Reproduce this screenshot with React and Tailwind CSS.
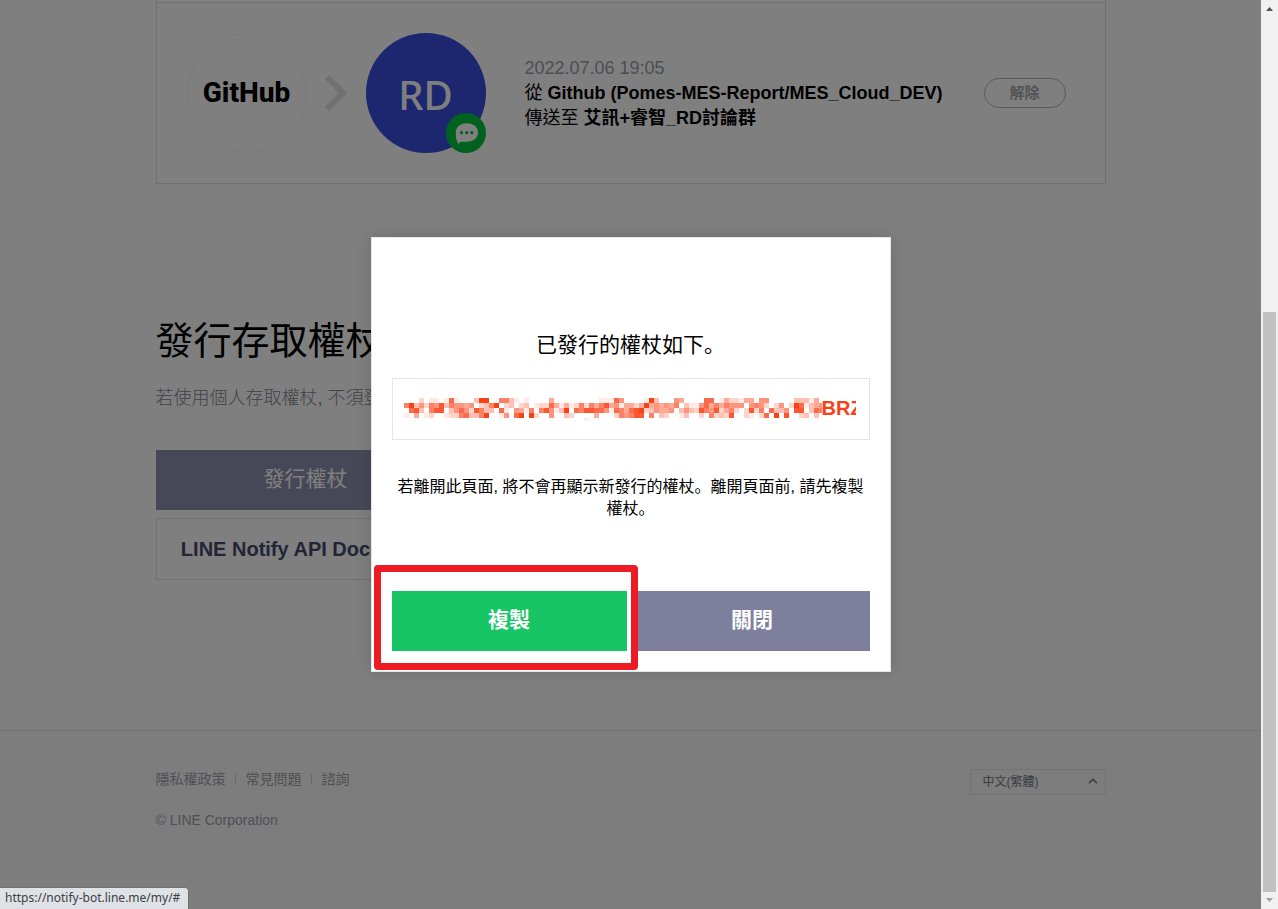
import React from "react";

const redactedRows = [
  "000201101710003990066310100004000000000111750000193000540000770142214405500000333140",
  "693526583655450236902302301227414126264684514424945454603115746465550565202502971345",
  "078306880357528633071054160685139076887751764789235445035328658246202826073350880376",
  "104012001226733690015079092005003200004000265688060320013002062328002102709080023030",
  "000000000000000000000000000000000000100000000000000000000000000000000000000000000000",
];

function RedactedToken() {
  return (
    <svg width="418" height="23" viewBox="0 0 418 23" className="shrink-0" shapeRendering="crispEdges" aria-hidden="true">
      {redactedRows.flatMap((row, y) =>
        row.split("").map((level, x) =>
          level === "0" ? null : (
            <rect
              key={`${x}-${y}`}
              x={x * 5}
              y={y * 5}
              width="5"
              height={y === 4 ? 3 : 5}
              fill="#f94118"
              fillOpacity={Number(level) / 9}
            />
          ),
        ),
      )}
    </svg>
  );
}

function ConnectedService() {
  return (
    <li className="flex items-center border-t border-[#e3e3e3] py-[30px] pr-[39px] pl-[30px]">
      <div className="flex size-[120px] shrink-0 items-center justify-center rounded-full border border-[#f4f4f4]">
        <span className="font-['Roboto',sans-serif] text-[28px] leading-8 font-extrabold text-black">
          GitHub
        </span>
      </div>
      <svg width="22" height="36" viewBox="0 0 22 36" className="ml-[18px] shrink-0" fill="none" aria-hidden="true">
        <path d="M2 2 L18 18 L2 34" stroke="#e2e2e2" strokeWidth="6" />
      </svg>
      <div className="relative ml-[19px] flex size-[120px] shrink-0 items-center justify-center rounded-full bg-[#394fdf]">
        <span className="pt-1 font-['Noto_Sans',sans-serif] text-[40px] leading-[48px] font-medium text-white">RD</span>
        <span className="absolute right-0 bottom-0 size-10 rounded-full bg-[#00c43c]">
          <svg viewBox="0 0 40 40" className="size-10" aria-hidden="true">
            <path
              d="M21 10.3c-6.4 0-11.2 3.4-11.2 9.3 0 4.4.2 8.200 2.900 11.800.3-1.500 1-2.600 2.700-2.600h5.600c6.400 0 11-3.800 11-9.300s-4.600-9.200-11-9.200z"
              fill="#fff"
            />
            <circle cx="15.500" cy="19.700" r="1.600" fill="#00c43c" />
            <circle cx="20.700" cy="19.700" r="1.600" fill="#00c43c" />
            <circle cx="25.800" cy="19.700" r="1.600" fill="#00c43c" />
          </svg>
        </span>
      </div>
      <div className="ml-[39px] grow text-lg leading-[25px] text-black">
        <time className="block text-[#9a9ca3]">2022.07.06 19:05</time>
        <p>
          從 <strong>Github (Pomes-MES-Report/MES_Cloud_DEV)</strong>
        </p>
        <p>
          傳送至 <strong>艾訊+睿智_RD討論群</strong>
        </p>
      </div>
      <button
        type="button"
        className="w-[82px] shrink-0 rounded-full border border-[#b2b2b2] py-1 text-[15px] leading-5 font-bold text-[#a5a7ab]"
      >
        解除
      </button>
    </li>
  );
}

function TokenDialog() {
  return (
    <div
      role="dialog"
      aria-modal="true"
      aria-labelledby="token-title"
      className="w-[520px] border border-[#e5e5e5] bg-white px-5 pt-[92px] pb-5 font-['Liberation_Sans','Noto_Sans_CJK_SC',sans-serif] shadow-[0_0_16px_rgba(0,0,0,0.15)]"
    >
      <h2 id="token-title" className="text-center text-[21px] leading-[30px] text-black">
        <label htmlFor="token">已發行的權杖如下。</label>
      </h2>
      <div className="mt-[18px] flex h-[62px] items-center overflow-hidden border border-[#e5e5e5] pr-[13px] pl-[11px]">
        <RedactedToken />
        <input
          id="token"
          readOnly
          defaultValue="BRZ"
          className="min-w-0 grow pb-[2px] text-xl leading-6 font-bold text-[#f94118] outline-none"
        />
      </div>
      <p className="mt-9 text-center text-base leading-[22px] text-black">
        若離開此頁面, 將不會再顯示新發行的權杖。離開頁面前, 請先複製權杖。
      </p>
      <div className="mt-[71px] flex gap-2 text-[21px] leading-[30px] font-bold text-white">
        <div className="relative flex-1">
          <button type="button" className="w-full bg-[#17c564] pt-[14px] pb-4">
            複製
          </button>
          <span className="pointer-events-none absolute -top-[26px] -right-[11px] -bottom-[19px] -left-[18px] z-10 rounded border-[7px] border-[#ed1c24]" />
        </div>
        <button type="button" className="flex-1 bg-[#7d7f9d] pt-[14px] pb-4">
          關閉
        </button>
      </div>
    </div>
  );
}

function PageFooter() {
  return (
    <footer className="grow border-t border-[#e6e6e6] bg-[#fafafa]">
      <div className="mx-auto flex max-w-[950px] items-start justify-between pt-[38px] text-sm leading-5 text-[#a0a1a8]">
        <div>
          <nav className="flex items-center">
            <a href="#privacy">隱私權政策</a>
            <span className="mr-[10px] ml-[9px] h-[10px] w-px bg-[#d5d5d5]" />
            <a href="#faq">常見問題</a>
            <span className="mr-[10px] ml-[9px] h-[10px] w-px bg-[#d5d5d5]" />
            <a href="#contact">諮詢</a>
          </nav>
          <p className="mt-[21px]">© LINE Corporation</p>
        </div>
        <div className="relative">
          <select
            aria-label="語言"
            className="block w-[136px] appearance-none rounded-none border border-[#e6e6e6] py-1 pl-3 text-xs leading-4 text-[#777782] outline-none"
          >
            <option>中文(繁體)</option>
          </select>
          <svg viewBox="0 0 10 6" className="absolute top-[9px] right-2 h-[6px] w-[10px]" fill="none" aria-hidden="true">
            <path d="M1 5.200 L5 1.200 L9 5.200" stroke="#70707c" strokeWidth="1.500" />
          </svg>
        </div>
      </div>
    </footer>
  );
}

function ScrollRail() {
  return (
    <div className="flex w-[17px] shrink-0 flex-col bg-[#f1f1f1]" aria-hidden="true">
      <svg viewBox="0 0 17 17" className="size-[17px] shrink-0">
        <path d="M5 11 L8.500 7 L12 11z" fill="#505050" />
      </svg>
      <div className="flex grow flex-col px-[2px] pt-[295px]">
        <div className="grow bg-[#c1c1c1]" />
      </div>
      <svg viewBox="0 0 17 17" className="size-[17px] shrink-0">
        <path d="M5 6 L8.500 10 L12 6z" fill="#a3a3a3" />
      </svg>
    </div>
  );
}

export default function App() {
  return (
    <div className="flex h-screen overflow-hidden bg-white font-['Liberation_Sans','Noto_Sans_CJK_TC',sans-serif]">
      <div className="relative flex min-w-0 grow flex-col overflow-hidden">
        <main className="mx-auto w-full max-w-[950px] pb-[150px]">
          <ul className="border-x border-b border-[#e3e3e3] pt-[2px]">
            <ConnectedService />
          </ul>
          <section className="pt-[129px]">
            <h1 className="text-[38px] leading-[56px] text-black">發行存取權杖</h1>
            <p className="mt-4 text-lg leading-[26px] font-light text-[#85868f]">
              若使用個人存取權杖, 不須登錄網站服務也可設定通知。
            </p>
            <div className="mt-[39px] flex w-[300px] flex-col gap-2 text-center leading-[30px]">
              <button type="button" className="bg-[#8e91ae] pt-[14px] pb-4 text-[21px] text-white">
                發行權杖
              </button>
              <a href="#api" className="border border-[#e3e3e3] py-[15px] text-xl leading-[30px] font-bold text-[#464b6e]">
                LINE Notify API Document
              </a>
            </div>
          </section>
        </main>
        <PageFooter />
        <div className="absolute inset-0 flex items-center justify-center bg-black/50">
          <TokenDialog />
        </div>
        <div className="absolute bottom-0 left-0 rounded-tr border-t border-r border-[#707070] bg-[#dee1e6] pr-2 pb-px pl-[5px] font-['Noto_Sans',sans-serif] text-xs leading-5 text-[#3c4043]">
          https://notify-bot.line.me/my/#
        </div>
      </div>
      <ScrollRail />
    </div>
  );
}
